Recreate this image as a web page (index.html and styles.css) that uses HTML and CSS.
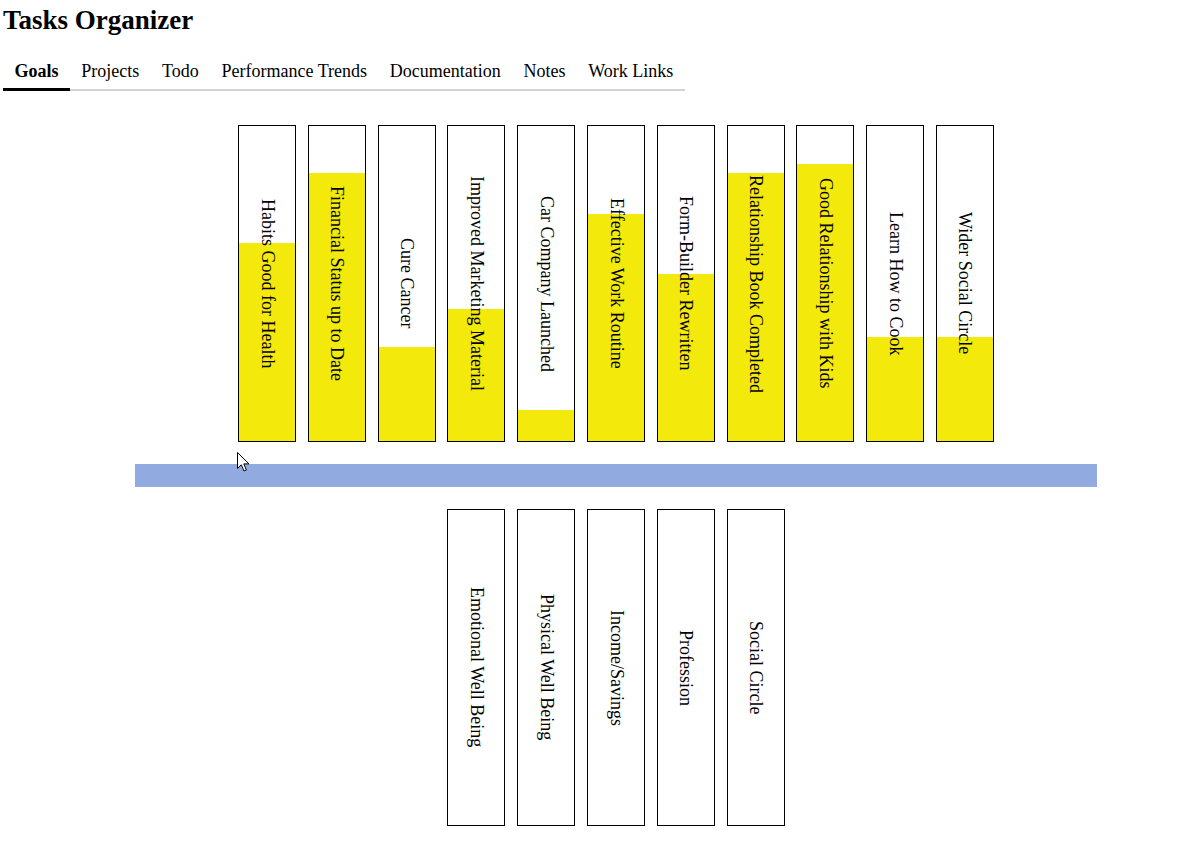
FILE: index.html
```html
<!DOCTYPE html>
<html lang="en">
<head>
<meta charset="utf-8">
<title>Tasks Organizer</title>
<link rel="stylesheet" href="styles.css">
</head>
<body>
  <h1 class="title">Tasks Organizer</h1>
  <nav class="tabs">
    <div class="tab active">Goals</div>
    <div class="tab">Projects</div>
    <div class="tab">Todo</div>
    <div class="tab">Performance Trends</div>
    <div class="tab">Documentation</div>
    <div class="tab">Notes</div>
    <div class="tab">Work Links</div>
  </nav>
  <main class="goals">
    <div class="row">
      <div class="bar" style="--p:63%"><span class="label">Habits Good for Health</span></div>
      <div class="bar" style="--p:85%"><span class="label">Financial Status up to Date</span></div>
      <div class="bar" style="--p:30%"><span class="label">Cure Cancer</span></div>
      <div class="bar" style="--p:42%"><span class="label">Improved Marketing Material</span></div>
      <div class="bar" style="--p:10%"><span class="label">Car Company Launched</span></div>
      <div class="bar" style="--p:72%"><span class="label">Effective Work Routine</span></div>
      <div class="bar" style="--p:53%"><span class="label">Form-Builder Rewritten</span></div>
      <div class="bar" style="--p:85%"><span class="label">Relationship Book Completed</span></div>
      <div class="bar" style="--p:88%"><span class="label">Good Relationship with Kids</span></div>
      <div class="bar" style="--p:33%"><span class="label">Learn How to Cook</span></div>
      <div class="bar" style="--p:33%"><span class="label">Wider Social Circle</span></div>
    </div>
    <div class="divider"></div>
    <div class="row">
      <div class="bar"><span class="label">Emotional Well Being</span></div>
      <div class="bar"><span class="label">Physical Well Being</span></div>
      <div class="bar"><span class="label">Income/Savings</span></div>
      <div class="bar"><span class="label">Profession</span></div>
      <div class="bar"><span class="label">Social Circle</span></div>
    </div>
  </main>
  <svg class="cursor" width="13" height="20" viewBox="0 0 13 20" aria-hidden="true">
    <path d="M0.5 0.5 L0.5 16.5 L4.3 12.8 L7 19 L9.4 18 L6.8 11.9 L12 11.9 Z" fill="#fff" stroke="#000" stroke-width="1" stroke-linejoin="miter"/>
  </svg>
</body>
</html>
```
FILE: styles.css
```css
html, body {
  background: #fff;
}
body {
  margin: 0;
  padding: 0 0 0 3px;
  font-family: "Liberation Serif", "Times New Roman", serif;
  color: #000;
  position: relative;
  min-height: 851px;
}
.title {
  margin: 5px 0 0;
  font-size: 27px;
  line-height: 31px;
  font-weight: bold;
}
.tabs {
  display: inline-flex;
  margin-top: 15px;
  border-bottom: 2px solid #d3d3d3;
}
.tab {
  font-size: 18px;
  line-height: 21px;
  padding: 10px 11.4px 6px;
  border-bottom: 3px solid transparent;
  margin-bottom: -2px;
}
.tab.active {
  font-weight: bold;
  border-bottom-color: #000;
}
.goals {
  margin: 34px 0 0 132px;
  width: 962px;
}
.row {
  display: flex;
  justify-content: center;
  gap: 11.8px;
}
.bar {
  --p: 0%;
  box-sizing: border-box;
  width: 58px;
  height: 317px;
  border: 1px solid #000;
  display: flex;
  align-items: center;
  justify-content: center;
  background: linear-gradient(to top, #f3e90b var(--p), #ffffff var(--p));
}
.label {
  writing-mode: vertical-rl;
  font-size: 18px;
  line-height: 21px;
  white-space: nowrap;
}
.divider {
  height: 23px;
  margin: 22px 0 22px;
  background: #91abe1;
}
.cursor {
  position: absolute;
  left: 237px;
  top: 452px;
}
```
